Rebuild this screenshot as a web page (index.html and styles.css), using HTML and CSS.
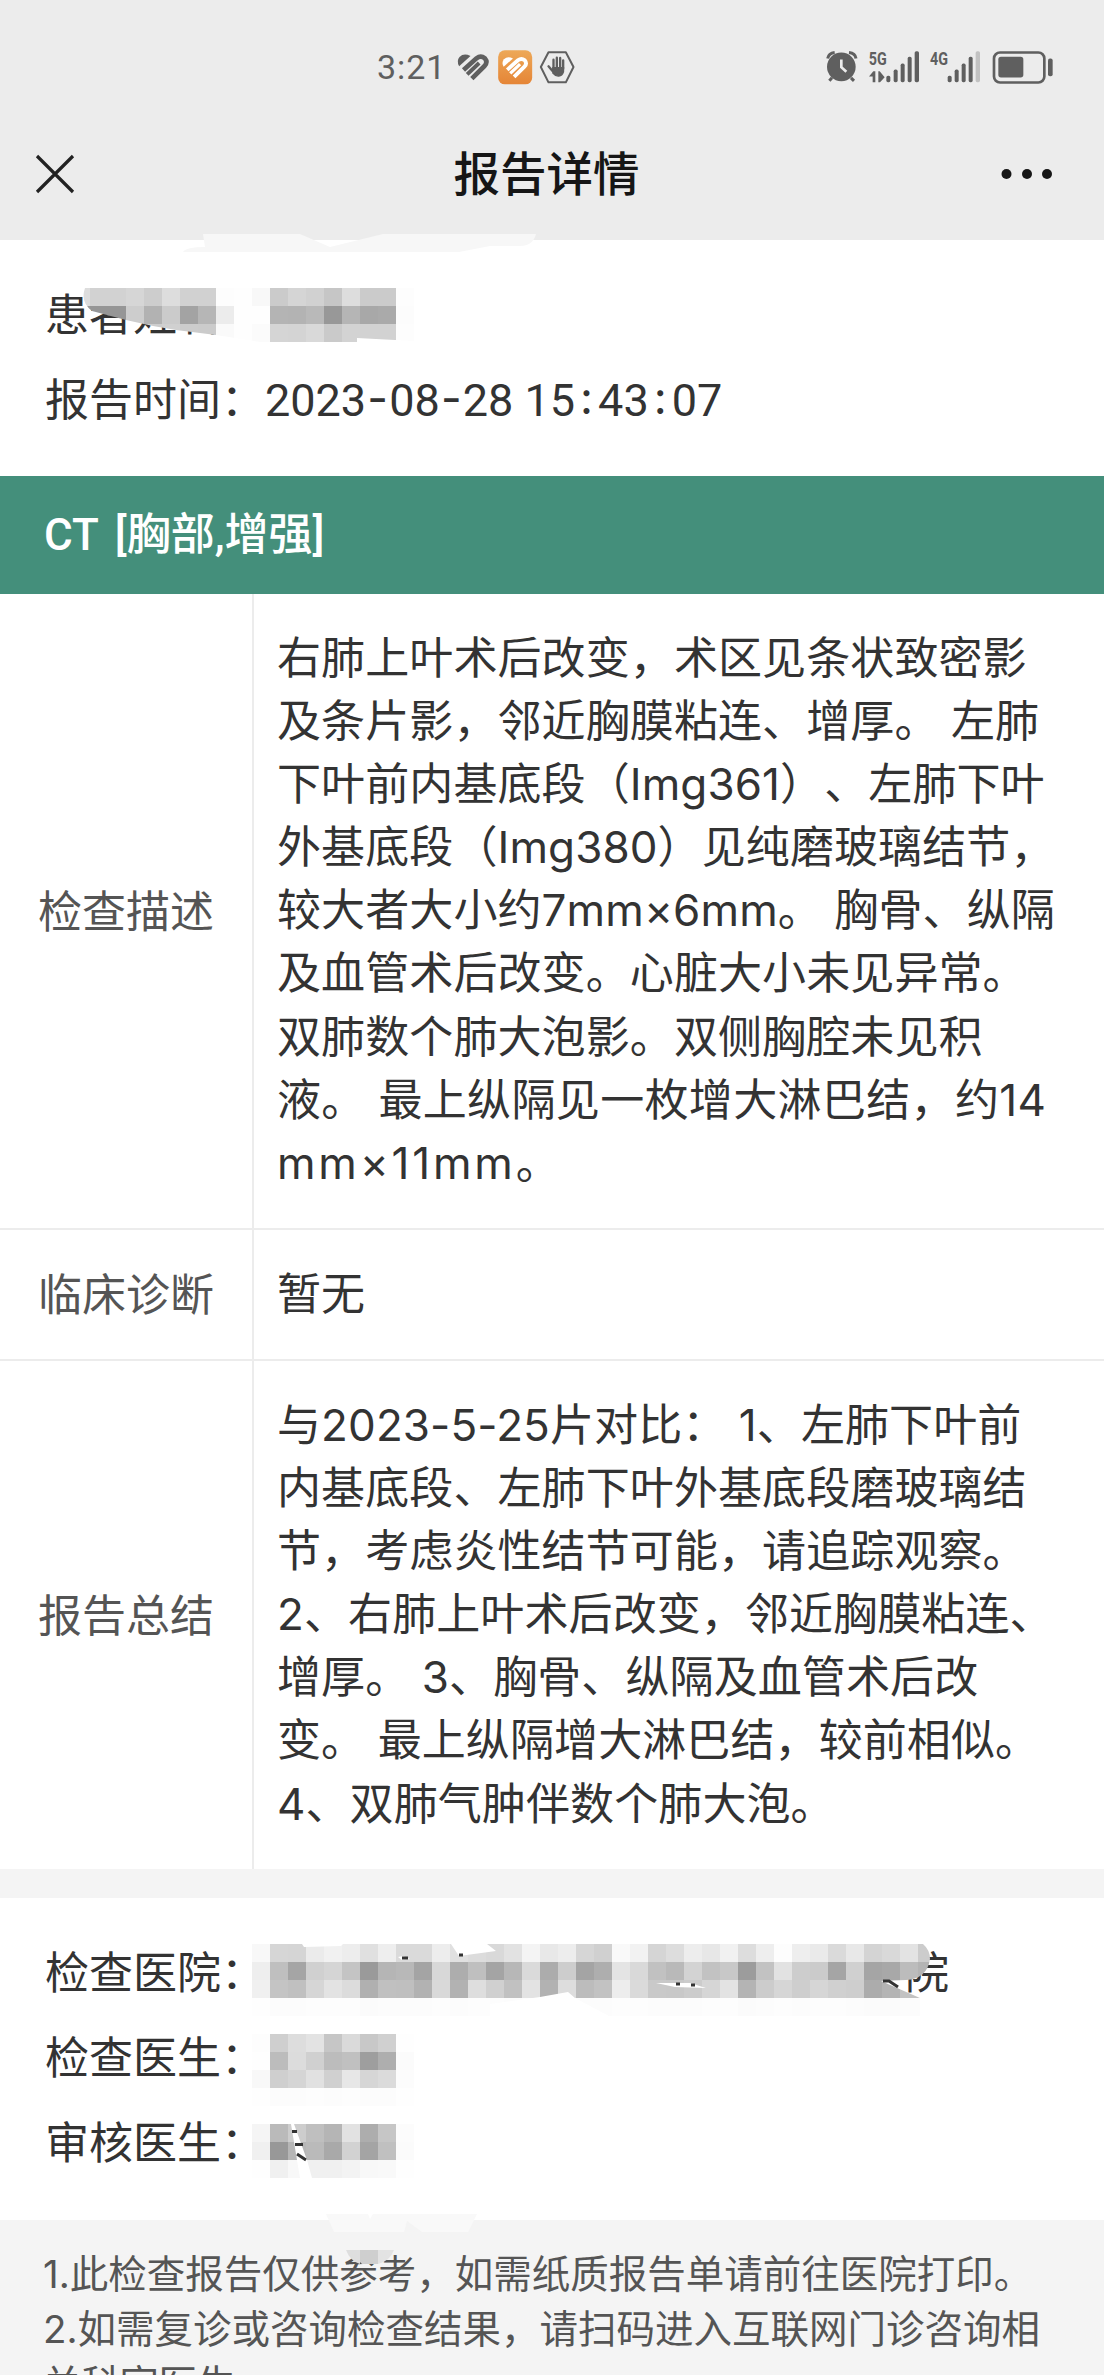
FILE: index.html
```html
<!DOCTYPE html>
<html lang="zh-CN">
<head>
  <meta charset="UTF-8">
  <title>报告详情</title>
  <link rel="stylesheet" href="styles.css">
</head>
<body>
  <header class="header">
    <div class="status-bar">
      <div class="status-left">
        <span class="time">3:21</span>
        <svg class="status-icons" width="122" height="40" viewBox="285 50 365 120">
          <defs>
            <g id="heart">
              <path d="M297 108 Q288 92 298 80 Q311 67 331 77 Z" fill="currentColor"/>
              <path d="M310 119 L349 84 Q362 74 374 84 Q384 96 373 107 L335 145" fill="none" stroke="currentColor" stroke-width="14"/>
              <path d="M321 132 L357 98" fill="none" stroke="currentColor" stroke-width="12"/>
            </g>
            <linearGradient id="orange" x1="0" y1="0" x2="0" y2="1">
              <stop offset="0" stop-color="#eda858"/>
              <stop offset="1" stop-color="#e58536"/>
            </linearGradient>
          </defs>
          <use href="#heart" color="#5f5f5f"/>
          <rect x="414" y="60" width="102" height="102" rx="20" fill="url(#orange)"/>
          <use href="#heart" color="#fff" transform="translate(187 21) scale(.82)"/>
          <path d="M565 66 H617 L640 110 L617 156 H565 L542 110 Z" fill="none" stroke="#5f5f5f" stroke-width="6" stroke-linejoin="round"/>
          <g stroke="#5f5f5f" stroke-width="7" stroke-linecap="round" fill="#5f5f5f">
            <path d="M580 88 V115 M590 82 V115 M600 83 V115 M609 90 V115 M565 108 L577 122"/>
            <path d="M578 112 H610 V124 Q606 136 596 137 Q586 138 578 128 Z" stroke-width="4"/>
          </g>
        </svg>
      </div>
      <svg class="status-right" width="230" height="37" viewBox="40 55 690 110">
        <g fill="#5f5f5f">
          <circle cx="92" cy="108" r="43"/>
          <path d="M51 83 Q54 67 72 65 M115 65 Q134 67 136 83 M64 141 L56 150 M121 141 L130 150" fill="none" stroke="#5f5f5f" stroke-width="9"/>
          <path d="M92 86 V109 L107 123" fill="none" stroke="#ececec" stroke-width="8"/>
          <text class="net" x="174" y="103" textLength="54" lengthAdjust="spacingAndGlyphs">5G</text>
          <path d="M175 137 L188 121 H194 V154 H186 V137 Z M203 121 H207 L222 139 L208 154 H203 Z"/>
          <rect x="227" y="135" width="12" height="19" rx="5"/>
          <rect x="249" y="116" width="12" height="38" rx="5"/>
          <rect x="270" y="98" width="12" height="56" rx="5"/>
          <rect x="291" y="78" width="12" height="76" rx="5"/>
          <rect x="312" y="61" width="13" height="93" rx="5"/>
          <text class="net" x="358" y="103" textLength="54" lengthAdjust="spacingAndGlyphs">4G</text>
          <rect x="411" y="135" width="12" height="19" rx="5"/>
          <rect x="432" y="116" width="12" height="38" rx="5"/>
          <rect x="453" y="98" width="12" height="56" rx="5"/>
          <rect x="474" y="78" width="12" height="76" rx="5"/>
          <rect x="495" y="61" width="13" height="93" rx="5" fill="#c2c2c2"/>
          <rect x="550" y="65" width="151" height="90" rx="18" fill="none" stroke="#5f5f5f" stroke-width="8"/>
          <rect x="563" y="78" width="75" height="62" rx="8"/>
          <rect x="712" y="83" width="14" height="53" rx="6"/>
        </g>
      </svg>
    </div>
    <div class="nav">
      <svg width="40" height="40" viewBox="0 0 40 40"><path d="M2 2 L38 38 M38 2 L2 38" stroke="#222" stroke-width="3.2"/></svg>
      <h1 class="title">报告详情</h1>
      <svg width="52" height="12" viewBox="0 0 52 12" fill="#161616"><circle cx="5.500" cy="6" r="5"/><circle cx="26" cy="6" r="5"/><circle cx="46" cy="6" r="5"/></svg>
    </div>
  </header>

  <section class="info">
    <p class="info-row"><span>患者姓名：</span></p>
    <p class="info-row"><span>报告时间：</span><span class="date">2023<i>-</i>08<i>-</i>28 15<i>:</i>43<i>:</i>07</span></p>
  </section>

  <h2 class="exam">CT [胸部,增强]</h2>

  <section class="report">
    <div class="row">
      <div class="label">检查描述</div>
      <div class="value">
        <p>右肺上叶术后改变，术区见条状致密影</p>
        <p>及条片影，邻近胸膜粘连、增厚。 左肺</p>
        <p>下叶前内基底段（Img361）、左肺下叶</p>
        <p>外基底段（Img380）见纯磨玻璃结节，</p>
        <p>较大者大小约7mm×6mm。 胸骨、纵隔</p>
        <p>及血管术后改变。心脏大小未见异常。</p>
        <p>双肺数个肺大泡影。双侧胸腔未见积</p>
        <p class="loose">液。 最上纵隔见一枚增大淋巴结，约14</p>
        <p class="size">mm×11mm。</p>
      </div>
    </div>
    <div class="row">
      <div class="label">临床诊断</div>
      <div class="value"><p>暂无</p></div>
    </div>
    <div class="row">
      <div class="label">报告总结</div>
      <div class="value">
        <p>与2023-5-25片对比： 1、左肺下叶前</p>
        <p>内基底段、左肺下叶外基底段磨玻璃结</p>
        <p>节，考虑炎性结节可能，请追踪观察。</p>
        <p>2、右肺上叶术后改变，邻近胸膜粘连、</p>
        <p>增厚。 3、胸骨、纵隔及血管术后改</p>
        <p>变。 最上纵隔增大淋巴结，较前相似。</p>
        <p>4、双肺气肿伴数个肺大泡。</p>
      </div>
    </div>
  </section>

  <section class="info doctors">
    <p class="info-row"><span>检查医院：</span><span class="masked"></span><span>院</span></p>
    <p class="info-row"><span>检查医生：</span></p>
    <p class="info-row"><span>审核医生：</span></p>
  </section>

  <footer class="notice">
    <p>1.此检查报告仅供参考，如需纸质报告单请前往医院打印。</p>
    <p>2.如需复诊或咨询检查结果，请扫码进入互联网门诊咨询相</p>
    <p>关科室医生。</p>
  </footer>

  <!-- privacy mosaic over the names -->
  <svg class="mosaic" width="1104" height="2376" viewBox="0 0 1104 2376">
    <defs>
      <clipPath id="clip-name"><path d="M85 288 H414 V341 L357 338 V342 H260 L216 335 L176 330 L153 326 L126 320 L92 311 Q80 302 85 288 Z"/></clipPath>
      <clipPath id="clip-hospital"><path d="M252 1944 H302 L304 1947 L341 1946 L343 1944 H451 L459 1956 L496 1951 L487 1944 H923 Q930 1950 930 1959 Q927 1979 906 1980 L881 1981 L920 1998 V2016 H609 L575 1998 L568 1992 L540 1997 L490 2004 V2016 H252 Z"/></clipPath>
    </defs>
    <path d="M203 234 H300 L330 247 L383 234 H536 Q533 246 520 246 H490 L459 252 H183 Q186 247 205 247 Z" fill="#f7f7f7"/>
    <path d="M326 2214 H368 L370 2219 L373 2214 H477 L468 2232 H422 L407 2221 L404 2232 H334 Z" fill="#f9f9f9"/>
    <path d="M346 2250 H360 V2264 Q350 2261 346 2250 Z" fill="#dedede"/>
    <path d="M360 2250 H378 V2264 H362 L360 2262 Z" fill="#cfcfcf"/>
    <path d="M378 2250 H394 Q390 2261 378 2264 Z" fill="#e3e3e3"/>
    <g id="name" clip-path="url(#clip-name)"></g>
    <g id="hospital" clip-path="url(#clip-hospital)"></g>
    <g id="doctor"></g>
    <g id="auditor"></g>
    <path d="M398 1957 L403 1956 L410 1959 L402 1960 Z M656 1983 L690 1983 L706 1988 L675 1987 Z M291 2124 H294 L307 2160 L312 2178 H300 Z" fill="#fff"/>
    <path d="M402 1958 H408 M459 1955 H463 M676 1984 H680 M691 1985 H695 M292 2131.500 H297 M295 2144.500 H303 M297 2154 L306 2160 M883 1981 H889 L898 1987" stroke="#333" stroke-width="3" fill="none"/>
  </svg>
  <script src="script.js"></script>
</body>
</html>
```
FILE: styles.css
```css
* {
  box-sizing: border-box;
}

body {
  margin: 0;
  height: 2376px;
  position: relative;
  overflow: hidden;
  background-color: #fff;
  color: #333;
  font-family: Inter, "Noto Sans CJK SC", sans-serif;
  font-size: 44px;
  text-spacing-trim: space-all;
}

h1, h2, p {
  margin: 0;
  white-space: nowrap;
}

.header {
  height: 240px;
  padding-top: 40px;
  background-color: #ececec;
}

.status-bar {
  display: flex;
  align-items: center;
  justify-content: space-between;
  height: 54px;
  padding: 0 50px 0 377px;
}

.status-left {
  display: flex;
  align-items: center;
}

.time {
  width: 78px;
  font-family: Roboto, sans-serif;
  font-size: 34px;
  letter-spacing: 0.9px;
  color: #5f5f5f;
}

.net {
  font-family: Roboto, sans-serif;
  font-size: 55px;
  font-weight: bold;
}

.nav {
  display: flex;
  align-items: center;
  justify-content: space-between;
  height: 80px;
  margin-top: 40px;
  padding: 0 51px 0 35px;
}

.title {
  padding-left: 17px;
  font-size: 46.5px;
  font-weight: 500;
  line-height: 80px;
  color: #161616;
}

.info {
  padding: 33px 45px;
}

.info-row {
  display: flex;
  height: 85px;
  line-height: 85px;
}

.date {
  font-family: Roboto, sans-serif;
  font-size: 45px;
}

.date i {
  display: inline-block;
  width: 23px;
  font-family: Inter, sans-serif;
  font-style: normal;
  line-height: 1;
  text-align: center;
  vertical-align: 2px;
}

.masked {
  width: 640px;
}

.exam {
  height: 118px;
  padding-left: 44px;
  font-family: Roboto, "Noto Sans CJK SC", sans-serif;
  font-size: 44px;
  font-weight: 500;
  line-height: 118px;
  word-spacing: 6px;
  color: #fff;
  background-color: #448f7b;
}

.row {
  display: flex;
  border-bottom: 2px solid #ececec;
}

.row:last-child {
  border-bottom: none;
}

.label {
  display: flex;
  align-items: center;
  justify-content: center;
  width: 254px;
  padding-bottom: 4px;
  border-right: 2px solid #ececec;
  color: #555;
}

.value {
  padding: 33px 0 33px 23px;
  line-height: 63.1px;
  letter-spacing: 0.1px;
}

.loose {
  letter-spacing: 0.35px;
}

.size {
  letter-spacing: 2.8px;
}

.doctors {
  height: 351px;
  border-top: 29px solid #f4f4f4;
}

.notice {
  height: 155px;
  padding: 27px 43px 0;
  font-size: 38.5px;
  line-height: 55px;
  color: #555;
  background-color: #f4f4f4;
  overflow: hidden;
}

.mosaic {
  position: absolute;
  top: 0;
  left: 0;
}
```
FILE: script.js
```javascript
const SIZE = 18;

// one hex grey per block, row by row
function drawMosaic(id, x, y, rows) {
  let html = "";
  rows.forEach((row, r) => {
    row.split(" ").forEach((c, i) => {
      html += `<rect x="${x + i * SIZE}" y="${y + r * SIZE}" width="${SIZE}" height="${SIZE}" fill="#${c}${c}${c}" shape-rendering="crispEdges"/>`;
    });
  });
  document.getElementById(id).innerHTML = html;
}

drawMosaic("name", 72, 288, [
  "dd d2 d2 d6 cd dd d1 d1 fd fe f8 cb d5 d1 c6 dd cb cb fd",
  "99 96 96 cd b2 cb a3 b6 ec fe fe b4 b3 b9 98 b5 a8 aa fc",
  "cd cd cd cd cd d0 cc cb fa fe fb d5 d4 d9 ca d3 d2 d2 fd"
]);

drawMosaic("hospital", 252, 1944, [
  "f8 d6 d5 eb f1 ed e0 ee da da ed e0 dc d9 e2 f4 e8 ed d6 d0 f9 f2 d5 dd ed e7 f1 dd ee fd ee ea da e8 d4 d9 e3 cc",
  "ee bf a5 d0 d5 c4 9a b5 b8 a4 d8 ad bf a4 b7 da ac cd a4 ae e4 d9 c1 b9 d3 c2 c8 9c c2 e2 cd cb a5 d0 a5 a8 bc b4",
  "f0 c4 c0 d6 e3 dc b0 c0 bf b2 d9 b2 de d0 c1 e3 b2 dd bc c2 ed da c9 c8 cc d6 e3 b4 cc d6 ce d6 d0 ce ac b4 c2 c8",
  "fe fc fc fd fd fd fb fc fc fc fd fc fd fd fc fd fc fd fc fc fd fd fc fc fc fd fd fb fc fd fc fd fd fc fb fb fc fc"
]);

drawMosaic("doctor", 252, 2034, [
  "fd cf dd e3 c6 da c8 d0 fe",
  "fe bc dc d0 bc c0 9e ae fb",
  "f8 cf d5 e1 d0 e7 d6 db fc",
  "fe fc fc fd fc fd fc fc fe"
]);

drawMosaic("auditor", 252, 2124, [
  "f5 ba cd bf b5 e2 ad c6 fc",
  "f0 98 b6 ba a9 d2 a4 c0 fb",
  "fe f0 f8 f0 f0 f3 f8 f9 fe"
]);
```
